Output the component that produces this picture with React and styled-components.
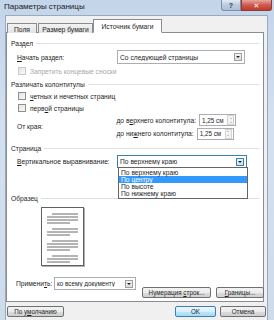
import React from 'react';
import styled, { createGlobalStyle } from 'styled-components';

const GlobalStyle = createGlobalStyle`
  html, body {
    margin: 0;
    padding: 0;
    background: #cfdcec;
  }
  body {
    font-family: "Liberation Sans", "DejaVu Sans", sans-serif;
    font-size: 6.7px;
    color: #1e1e1e;
  }
`;

const Window = styled.div`
  width: 274px;
  height: 320px;
  display: flex;
  flex-direction: column;
  background: linear-gradient(180deg, #c3d5ea 0%, #d3e0ef 40%, #cddbeb 100%);
  overflow: hidden;
`;

const TitleBar = styled.div`
  height: 15px;
  display: flex;
  align-items: flex-start;
  padding-left: 4px;
`;

const Title = styled.span`
  margin-top: 2px;
  font-size: 8px;
  line-height: 9px;
  color: #1a1a1a;
`;

const Controls = styled.div`
  margin-left: auto;
  margin-right: 2px;
  display: flex;
`;

const CtrlButton = styled.div`
  width: ${(p) => p.$w}px;
  height: 10px;
  display: flex;
  align-items: center;
  justify-content: center;
  border: 1px solid ${(p) => (p.$close ? '#8a3b36' : '#7d8ea6')};
  border-top: none;
  border-radius: ${(p) => (p.$close ? '0 0 3px 0' : '0 0 0 3px')};
  background: ${(p) =>
    p.$close
      ? 'linear-gradient(180deg, #e7a79f 0%, #cf5a4e 50%, #c23a2b 100%)'
      : 'linear-gradient(180deg, #e3ebf5 0%, #bccbde 50%, #aebfd6 100%)'};
  color: ${(p) => (p.$close ? '#fff' : '#2a3a50')};
  font-size: 7px;
  font-weight: bold;
  line-height: 1;
`;

const Body = styled.div`
  flex: 1;
  margin: 0 6px 0 5px;
  background: #f0f0f0;
  border: 1px solid #9aa9bd;
  border-bottom: none;
  padding: 3px 3px 0 0;
  display: flex;
  flex-direction: column;
`;

const TabRow = styled.div`
  height: 14px;
  display: flex;
  align-items: flex-end;
  padding-left: 1px;
  margin-bottom: -1px;
  position: relative;
  z-index: 1;
`;

const Tab = styled.div`
  height: ${(p) => (p.$active ? 14 : 10)}px;
  width: ${(p) => p.$w}px;
  margin-right: ${(p) => (p.$active ? 0 : 1)}px;
  margin-left: ${(p) => (p.$active ? -1 : 0)}px;
  box-sizing: border-box;
  border: 1px solid #898c95;
  border-bottom: ${(p) => (p.$active ? '1px solid #fff' : 'none')};
  background: ${(p) =>
    p.$active ? '#fff' : 'linear-gradient(180deg, #f2f2f2 0%, #e3e3e3 100%)'};
  display: flex;
  align-items: center;
  justify-content: center;
  padding-top: ${(p) => (p.$active ? 0 : 1)}px;
`;

const Panel = styled.div`
  height: 270px;
  box-sizing: border-box;
  border: 1px solid #898c95;
  background: #fff;
  display: flex;
  flex-direction: column;
  padding: 5px 4px 3px 4px;
`;

const GroupTitle = styled.div`
  height: 10px;
  margin-top: ${(p) => p.$mt || 0}px;
  display: flex;
  align-items: center;
  &::after {
    content: '';
    flex: 1;
    margin-left: 3px;
    border-top: 1px solid #dcdfe4;
  }
`;

const Row = styled.div`
  height: ${(p) => p.$h}px;
  margin-top: ${(p) => p.$mt || 0}px;
  padding-left: ${(p) => (p.$indent ? 6 : 0)}px;
  display: flex;
  align-items: center;
  position: relative;
`;

const Label = styled.span`
  width: ${(p) => (p.$w ? `${p.$w}px` : 'auto')};
  color: ${(p) => (p.$disabled ? '#a8a8a8' : '#1e1e1e')};
  white-space: nowrap;
  flex-shrink: 0;
`;

const U = styled.span`
  text-decoration: underline;
`;

const CheckBox = styled.span`
  width: 6px;
  height: 6px;
  margin-left: 1px;
  margin-right: 4px;
  border: 1px solid ${(p) => (p.$disabled ? '#c9c9c9' : '#8f8f8f')};
  background: linear-gradient(135deg, #e4e4e4 0%, #f8f8f8 100%);
  flex-shrink: 0;
`;

const Combo = styled.div`
  width: ${(p) => p.$w}px;
  height: ${(p) => p.$h || 14}px;
  box-sizing: border-box;
  border: 1px solid ${(p) => (p.$open ? '#3c7fb1' : '#abadb3')};
  background: #fff;
  display: flex;
  align-items: center;
  padding-left: 2px;
  position: relative;
  flex-shrink: 0;
`;

const ComboText = styled.span`
  flex: 1;
  white-space: nowrap;
  overflow: hidden;
  font-size: ${(p) => p.$fs || 6.7}px;
`;

const ArrowBtn = styled.span`
  width: 8px;
  height: 8px;
  margin-right: 2px;
  box-sizing: border-box;
  border: 1px solid ${(p) => (p.$open ? '#3c7fb1' : '#a0a0a0')};
  background: ${(p) =>
    p.$open
      ? 'linear-gradient(180deg, #e5f4fc 0%, #c4e5f6 100%)'
      : 'linear-gradient(180deg, #f4f4f4 0%, #dcdcdc 100%)'};
  display: flex;
  align-items: center;
  justify-content: center;
  flex-shrink: 0;
  &::after {
    content: '';
    border-left: 2px solid transparent;
    border-right: 2px solid transparent;
    border-top: 2px solid #222;
  }
`;

const DropList = styled.div`
  position: absolute;
  top: 100%;
  left: 0;
  width: 130px;
  box-sizing: border-box;
  border: 1px solid #646464;
  background: #fff;
  padding: 1px 0;
  z-index: 5;
`;

const DropItem = styled.div`
  height: 7px;
  line-height: 7px;
  padding-left: 2px;
  background: ${(p) => (p.$selected ? '#3399ff' : 'transparent')};
  color: ${(p) => (p.$selected ? '#fff' : '#1e1e1e')};
`;

const MarginBlock = styled.div`
  display: flex;
  align-items: center;
  padding-left: 6px;
`;

const MarginRows = styled.div`
  margin-left: auto;
  margin-right: 23px;
  display: flex;
  flex-direction: column;
`;

const Spin = styled.div`
  width: 37px;
  height: 12px;
  margin-left: 3px;
  box-sizing: border-box;
  border: 1px solid #abadb3;
  background: #fff;
  display: flex;
  align-items: center;
  padding-left: 2px;
  font-size: 6.3px;
  white-space: nowrap;
`;

const SpinButtons = styled.span`
  margin-left: auto;
  margin-right: 1px;
  width: 5px;
  height: 8px;
  display: flex;
  flex-direction: column;
  justify-content: space-around;
  align-items: center;
  border: 1px solid #d4d4d4;
  background: #f3f3f3;
  flex-shrink: 0;
`;

const SpinArrow = styled.span`
  border-left: 1.5px solid transparent;
  border-right: 1.5px solid transparent;
  ${(p) => (p.$up ? 'border-bottom' : 'border-top')}: 1.5px solid #9a9a9a;
`;

const Preview = styled.div`
  width: 43px;
  height: 59px;
  margin-top: 4px;
  margin-left: 30px;
  box-sizing: border-box;
  border: 1px solid #606060;
  background: #fff;
  box-shadow: 1px 1px 0 #b0b0b0;
`;

const BottomRow = styled.div`
  margin-top: 11px;
  height: 21px;
  display: flex;
  align-items: flex-start;
`;

const ApplyGroup = styled.div`
  display: flex;
  align-items: center;
  height: 13px;
  padding-left: 5px;
`;

const Button = styled.div`
  width: ${(p) => p.$w}px;
  height: ${(p) => p.$h || 11}px;
  margin-left: ${(p) => p.$ml || 0}px;
  margin-top: ${(p) => p.$mt || 0}px;
  box-sizing: border-box;
  border: 1px solid ${(p) => (p.$focus ? '#3c7fb1' : '#707070')};
  border-radius: 2px;
  background: ${(p) =>
    p.$focus
      ? 'linear-gradient(180deg, #eaf6fd 0%, #d9f0fc 50%, #bee6fd 51%, #a7d9f5 100%)'
      : 'linear-gradient(180deg, #f2f2f2 0%, #ebebeb 50%, #dddddd 51%, #cfcfcf 100%)'};
  display: flex;
  align-items: center;
  justify-content: center;
  white-space: nowrap;
  flex-shrink: 0;
  font-size: 6.3px;
`;

const Footer = styled.div`
  display: flex;
  margin-top: 4px;
  padding-left: 1px;
`;

function PageLines() {
  const groups = [
    [6, 9, 12, 15],
    [21, 24, 27],
    [33, 36, 39, 42],
    [48, 51, 54],
  ];
  const lines = [];
  groups.forEach((g) =>
    g.forEach((y, i) => {
      lines.push(
        <line
          key={y}
          x1={i === 0 ? 10 : 5}
          x2={i === g.length - 1 ? 28 : 36}
          y1={y}
          y2={y}
          stroke="#6b6b6b"
          strokeWidth="1"
        />
      );
    })
  );
  return (
    <svg width="41" height="57" viewBox="0 0 41 57">
      {lines}
    </svg>
  );
}

export default function App() {
  return (
    <>
      <GlobalStyle />
      <Window>
        <TitleBar>
          <Title>Параметры страницы</Title>
          <Controls>
            <CtrlButton $w={18}>?</CtrlButton>
            <CtrlButton $w={29} $close>
              ✕
            </CtrlButton>
          </Controls>
        </TitleBar>
        <Body>
          <TabRow>
            <Tab $w={30}>Поля</Tab>
            <Tab $w={55}>Размер бумаги</Tab>
            <Tab $w={69} $active>
              Источник бумаги
            </Tab>
          </TabRow>
          <Panel>
            <GroupTitle>Раздел</GroupTitle>
            <Row $h={14} $mt={2} $indent>
              <Label $w={100}>
                <U>Н</U>ачать раздел:
              </Label>
              <Combo $w={128}>
                <ComboText>Со следующей страницы</ComboText>
                <ArrowBtn />
              </Combo>
            </Row>
            <Row $h={14} $indent>
              <CheckBox $disabled />
              <Label $disabled>Запретить концевые сноски</Label>
            </Row>

            <GroupTitle $mt={1}>Различать колонтитулы</GroupTitle>
            <Row $h={10} $mt={2} $indent>
              <CheckBox />
              <Label>
                <U>ч</U>етных и нечетных страниц
              </Label>
            </Row>
            <Row $h={10} $mt={2} $indent>
              <CheckBox />
              <Label>
                перв<U>о</U>й страницы
              </Label>
            </Row>
            <MarginBlock>
              <Label>От края:</Label>
              <MarginRows>
                <Row $h={14}>
                  <Label>
                    до в<U>е</U>рхнего колонтитула:
                  </Label>
                  <Spin>
                    <span>1,25 см</span>
                    <SpinButtons>
                      <SpinArrow $up />
                      <SpinArrow />
                    </SpinButtons>
                  </Spin>
                </Row>
                <Row $h={13}>
                  <Label>
                    до ни<U>ж</U>него колонтитула:
                  </Label>
                  <Spin>
                    <span>1,25 см</span>
                    <SpinButtons>
                      <SpinArrow $up />
                      <SpinArrow />
                    </SpinButtons>
                  </Spin>
                </Row>
              </MarginRows>
            </MarginBlock>

            <GroupTitle $mt={3}>Страница</GroupTitle>
            <Row $h={13} $mt={2} $indent>
              <Label $w={100}>
                <U>В</U>ертикальное выравнивание:
              </Label>
              <Combo $w={130} $h={13} $open>
                <ComboText>По верхнему краю</ComboText>
                <ArrowBtn $open />
                <DropList>
                  <DropItem>По верхнему краю</DropItem>
                  <DropItem $selected>По центру</DropItem>
                  <DropItem>По высоте</DropItem>
                  <DropItem>По нижнему краю</DropItem>
                </DropList>
              </Combo>
            </Row>

            <GroupTitle $mt={25}>Образец</GroupTitle>
            <Preview>
              <PageLines />
            </Preview>

            <BottomRow>
              <ApplyGroup>
                <Label $w={38}>
                  Примени<U>т</U>ь:
                </Label>
                <Combo $w={82} $h={13}>
                  <ComboText $fs={6.3}>ко всему документу</ComboText>
                  <ArrowBtn />
                </Combo>
              </ApplyGroup>
              <Button $w={69} $ml={6} $mt={10}>
                <span>
                  Нумерация <U>с</U>трок...
                </span>
              </Button>
              <Button $w={48} $ml={5} $mt={10}>
                <span>
                  <U>Г</U>раницы...
                </span>
              </Button>
            </BottomRow>
          </Panel>
          <Footer>
            <Button $w={57}>
              <span>
                По у<U>м</U>олчанию
              </span>
            </Button>
            <Button $w={41} $ml={111} $focus>
              OK
            </Button>
            <Button $w={46} $ml={4}>
              Отмена
            </Button>
          </Footer>
        </Body>
      </Window>
    </>
  );
}
